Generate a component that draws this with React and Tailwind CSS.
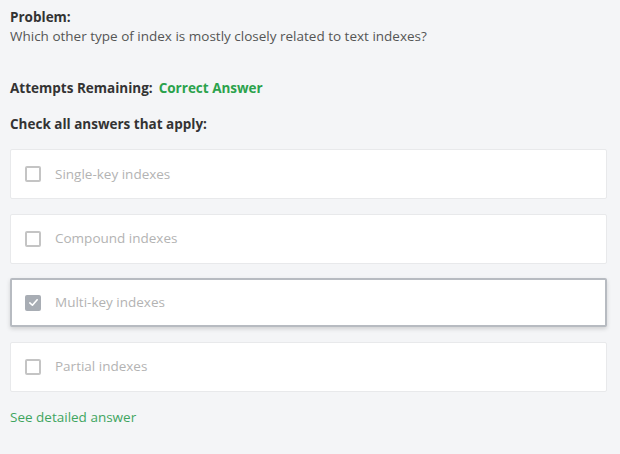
import React from "react";

const options = [
  { label: "Single-key indexes", checked: false },
  { label: "Compound indexes", checked: false },
  { label: "Multi-key indexes", checked: true },
  { label: "Partial indexes", checked: false },
];

function Box({ checked }) {
  if (checked) {
    return (
      <span className="flex h-4 w-4 shrink-0 items-center justify-center rounded-[2px] bg-[#a8adb4]">
        <svg width="11" height="11" viewBox="0 0 12 12" fill="none">
          <path d="M2 6.5 L4.8 9 L10 3" stroke="white" strokeWidth="1.8" strokeLinecap="round" strokeLinejoin="round" />
        </svg>
      </span>
    );
  }
  return <span className="block h-4 w-4 shrink-0 rounded-[2px] border-2 border-[#c4c4c4] bg-white" />;
}

export default function App() {
  return (
    <div
      className="min-h-[454px] w-[620px] bg-[#f4f5f7] px-[10px] pt-[8px] text-[13.5px] text-[#3a3a3a]"
      style={{ fontFamily: "'Open Sans', sans-serif" }}
    >
      <div className="font-bold leading-[18px] text-[#333]">Problem:</div>
      <div className="leading-[20px] text-[#555]">Which other type of index is mostly closely related to text indexes?</div>
      <div className="mt-[33px] flex gap-[6px] font-bold leading-[18px]">
        <span className="text-[#333]">Attempts Remaining:</span>
        <span className="text-[#2ba24c]">Correct Answer</span>
      </div>
      <div className="mt-[18px] font-bold leading-[18px] text-[#333]">Check all answers that apply:</div>
      <div className="mt-[16px] flex w-[597px] flex-col gap-[14.5px]">
        {options.map((o) => (
          <div
            key={o.label}
            className={
              o.checked
                ? "flex h-[49px] items-center gap-[14px] rounded-[2px] border-2 border-[#b7bbc1] bg-white pl-[13px] shadow-[0_2px_4px_rgba(0,0,0,0.15)]"
                : "flex h-[50px] items-center gap-[14px] rounded-[2px] border border-[#e8e9eb] bg-white pl-[14px]"
            }
          >
            <Box checked={o.checked} />
            <span className="text-[#b3b3b3]">{o.label}</span>
          </div>
        ))}
      </div>
      <div className="mt-[15px] leading-[20px] text-[#3fa55f]">See detailed answer</div>
    </div>
  );
}
